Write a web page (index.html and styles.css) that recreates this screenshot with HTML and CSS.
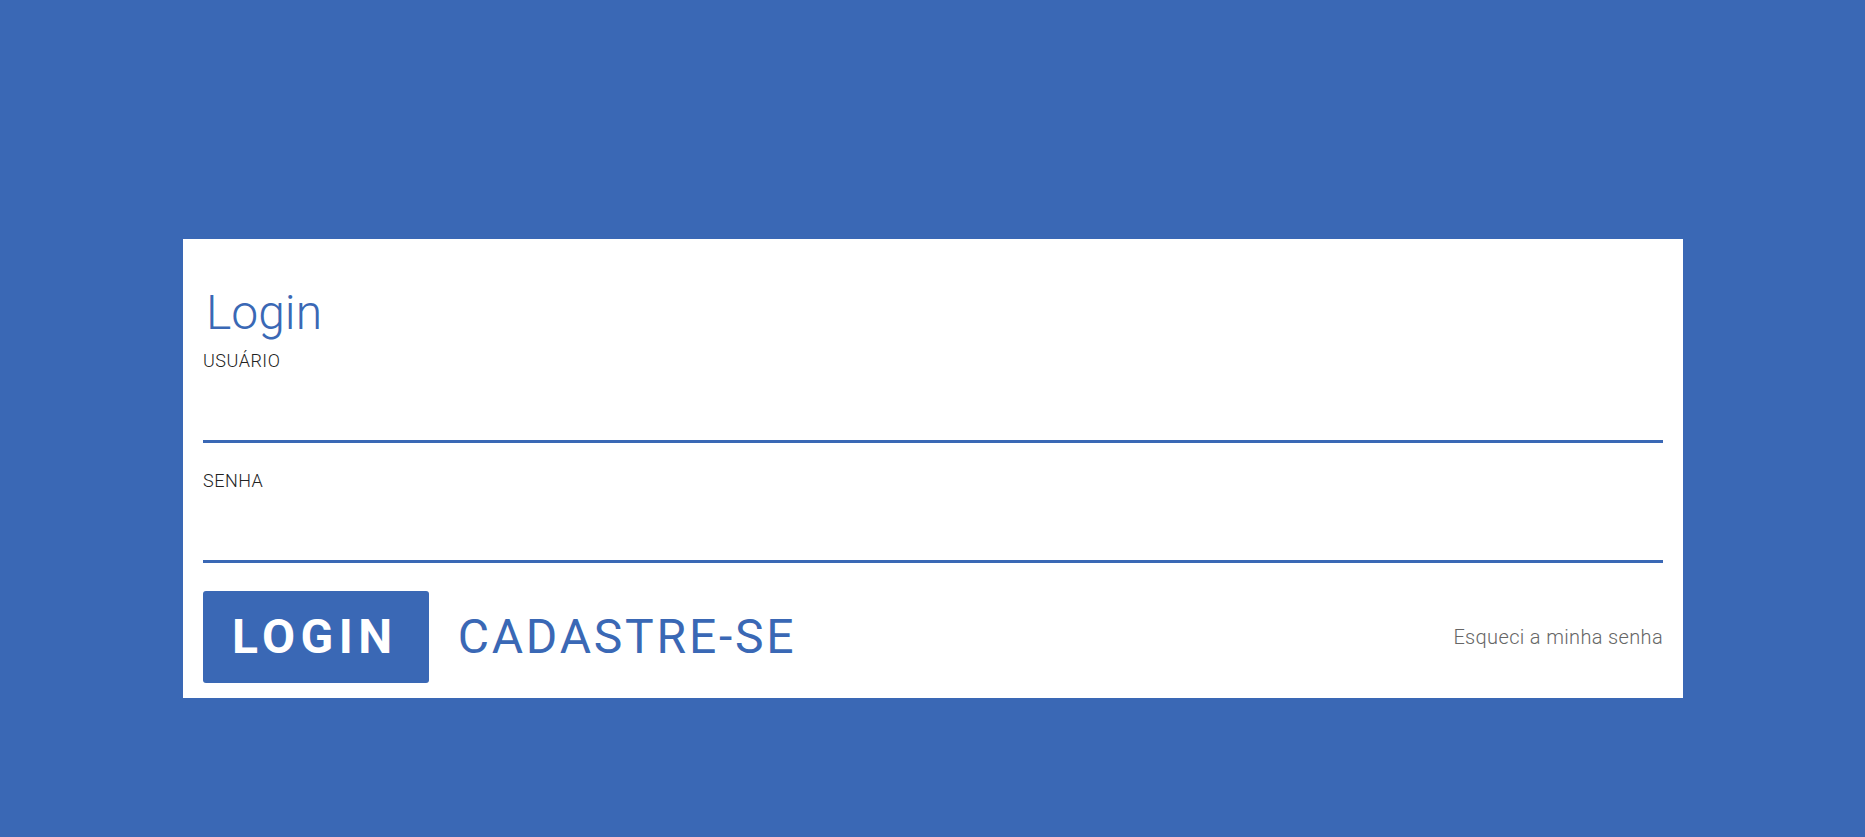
FILE: index.html
```html
<!DOCTYPE html>
<html lang="pt-BR">
<head>
<meta charset="utf-8">
<title>Login</title>
<link rel="stylesheet" href="styles.css">
</head>
<body>
<main class="page">
  <form class="card">
    <h1 class="title">Login</h1>
    <div class="field">
      <label class="label" for="user">USUÁRIO</label>
      <input class="input" id="user" type="text">
    </div>
    <div class="field">
      <label class="label" for="pass">SENHA</label>
      <input class="input" id="pass" type="password">
    </div>
    <div class="actions">
      <button class="btn btn-primary" type="button">LOGIN</button>
      <button class="btn btn-flat" type="button">CADASTRE-SE</button>
      <a class="forgot" href="#">Esqueci a minha senha</a>
    </div>
  </form>
</main>
</body>
</html>
```
FILE: styles.css
```css
* { box-sizing: border-box; }
html, body {
  margin: 0;
  padding: 0;
  height: 100%;
}
body {
  background: #3a68b5;
  font-family: Roboto, "Liberation Sans", sans-serif;
}
.page {
  padding: 239px 182px 0 183px;
}
.card {
  background: #fff;
  padding: 44px 20px 15px 20px;
  display: flex;
  flex-direction: column;
}
.title {
  margin: 0 0 7px 0;
  font-size: 48px;
  line-height: 60px;
  font-weight: 300;
  color: #3a68b5;
  padding-left: 3px;
}
.field {
  display: flex;
  flex-direction: column;
}
.field + .field {
  margin-top: 27px;
}
.label {
  font-size: 18px;
  line-height: 22px;
  color: #222;
  font-weight: 300;
  letter-spacing: 0.5px;
}
.input {
  height: 71px;
  border: none;
  border-bottom: 3px solid #3a68b5;
  outline: none;
  background: transparent;
  font: inherit;
  padding: 0;
}
.actions {
  margin-top: 28px;
  display: flex;
  align-items: center;
}
.btn {
  height: 92px;
  border: none;
  font-family: Roboto, "Liberation Sans", sans-serif;
  font-size: 48px;
  line-height: 92px;
  cursor: pointer;
}
.btn-primary {
  background: #3a68b5;
  color: #fff;
  font-weight: 700;
  letter-spacing: 5.5px;
  border-radius: 3px;
  padding: 0 31px 0 29px;
}
.btn-flat {
  background: transparent;
  color: #3a68b5;
  font-weight: 400;
  letter-spacing: 2.8px;
  padding: 0 30px 0 29px;
}
.forgot {
  margin-left: auto;
  font-size: 20px;
  font-weight: 300;
  letter-spacing: 0.35px;
  color: #666;
  text-decoration: none;
}
```
